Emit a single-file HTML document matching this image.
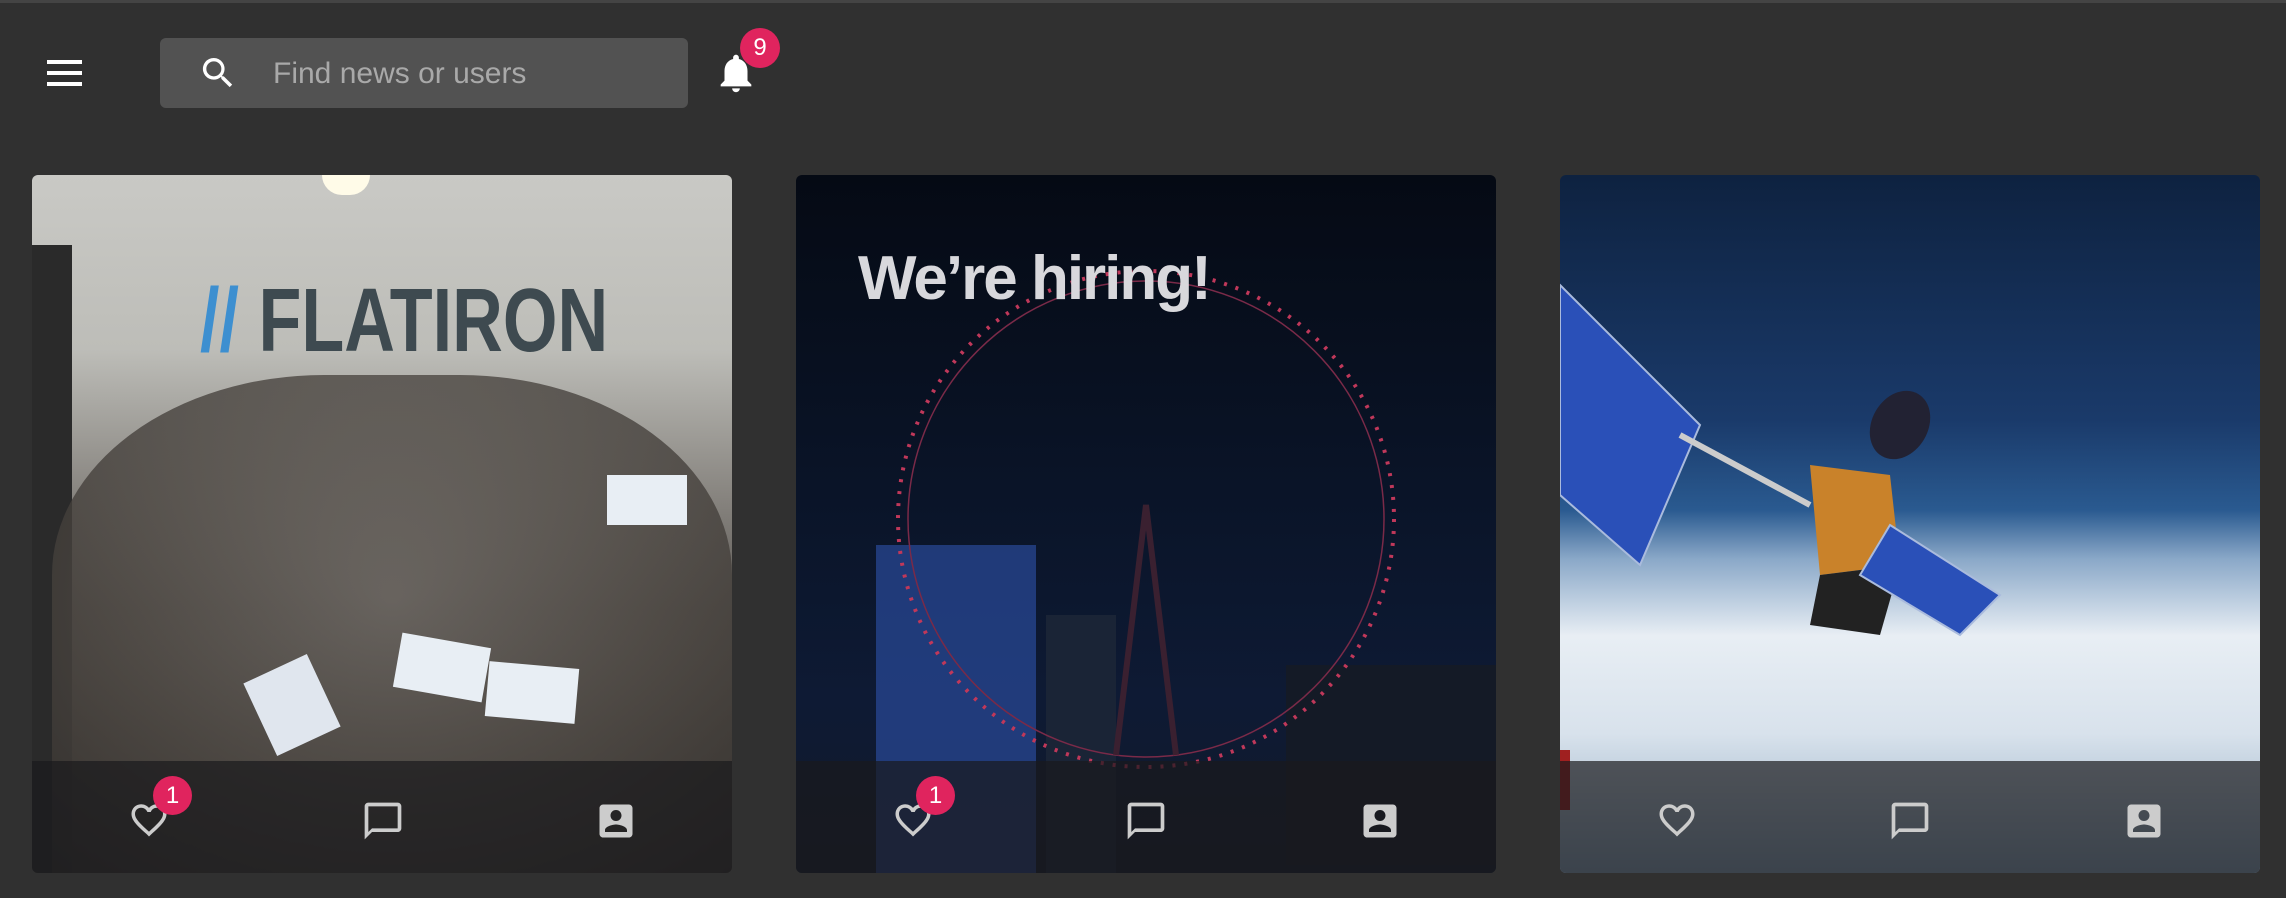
<!DOCTYPE html>
<html><head><meta charset="utf-8"><style>
*{margin:0;padding:0;box-sizing:border-box}
html,body{width:2286px;height:898px;overflow:hidden;background:#303030;font-family:"Liberation Sans",sans-serif}
body{border-top:3px solid #444;}
.ham{position:absolute;left:47px;top:60px;width:35px}
.ham i{display:block;height:4px;background:#fff;margin-bottom:7px}
.search{position:absolute;left:160px;top:38px;width:528px;height:70px;background:#525252;border-radius:6px}
.search span{position:absolute;left:113px;top:19px;font-size:30px;color:#a9a9a9}
.badge{position:absolute;background:#e0245e;color:#fff;border-radius:50%;text-align:center}
.card{position:absolute;top:175px;width:700px;height:698px;border-radius:6px;overflow:hidden}
.bar{position:absolute;left:0;right:0;bottom:0;height:112px;background:rgba(25,25,28,.7)}
.ic{position:absolute;top:799px}
</style></head><body>
<div class="ham"><i></i><i></i><i></i></div>
<div class="search">
<svg style="position:absolute;left:38px;top:15px" width="40" height="40" viewBox="0 0 24 24"><path fill="#fff" d="M15.5 14h-.8l-.3-.3A6.5 6.5 0 1 0 9.5 16a6.5 6.5 0 0 0 4.2-1.6l.3.3v.8l5 5 1.5-1.5-5-5zm-6 0a4.5 4.5 0 1 1 0-9 4.5 4.5 0 0 1 0 9z"/></svg>
<span>Find news or users</span></div>
<svg style="position:absolute;left:713px;top:48px" width="46" height="50" viewBox="0 0 24 24"><path fill="#fff" d="M12 22c1.1 0 2-.9 2-2h-4c0 1.1.9 2 2 2zm6-6v-5c0-3.1-1.6-5.6-4.5-6.3V4c0-.8-.7-1.5-1.5-1.5S10.5 3.2 10.5 4v.7C7.6 5.4 6 7.9 6 11v5l-2 2v1h16v-1l-2-2z"/></svg>
<div class="badge" style="left:740px;top:28px;width:40px;height:40px;font-size:24px;line-height:40px">9</div>

<div class="card" style="left:32px;background:linear-gradient(180deg,#c9c9c5 0%,#bdbdb8 25%,#8a8782 45%,#5e5a56 62%,#45413d 80%,#33302d 100%)">
<div style="position:absolute;left:0;top:70px;width:40px;height:630px;background:#2a2a2a"></div>
<div style="position:absolute;left:290px;top:0;width:48px;height:20px;background:#fffbe8;border-radius:0 0 24px 24px"></div>
<div style="position:absolute;left:168px;top:95px;font-size:90px;font-weight:bold;color:#3e4a50;white-space:nowrap;transform:scaleX(.78);transform-origin:left"><span style="color:#3d8fd0">//</span> FLATIRON</div>
<div style="position:absolute;left:20px;top:200px;width:680px;height:500px;background:radial-gradient(ellipse at 50% 45%,#6a6560 0%,#4d4843 55%,#35312e 100%);opacity:.8;border-radius:40% 40% 0 0"></div>
<div style="position:absolute;left:575px;top:300px;width:80px;height:50px;background:#e8eef4"></div>
<div style="position:absolute;left:455px;top:490px;width:90px;height:55px;background:#e8eef4;transform:rotate(5deg)"></div>
<div style="position:absolute;left:365px;top:465px;width:90px;height:55px;background:#e8eef4;transform:rotate(10deg)"></div>
<div style="position:absolute;left:225px;top:490px;width:70px;height:80px;background:#e0e6ee;transform:rotate(-25deg)"></div>
<div class="bar"></div></div>

<div class="card" style="left:796px;background:linear-gradient(180deg,#050a14 0%,#0a1428 45%,#0e1a34 75%,#121a2a 100%)">
<svg style="position:absolute;left:0;top:0" width="700" height="700">
<rect x="80" y="370" width="160" height="330" fill="#2a4a9a" opacity=".7"/>
<rect x="250" y="440" width="70" height="260" fill="#1a2436"/>
<rect x="490" y="490" width="210" height="200" fill="#141a26"/>
<circle cx="350" cy="344" r="248" fill="none" stroke="#c0385a" stroke-width="4" stroke-dasharray="3 9"/>
<circle cx="350" cy="344" r="238" fill="none" stroke="#7a2a48" stroke-width="1.5"/>
<path d="M320 580 L350 330 L380 580" stroke="#3a2030" stroke-width="6" fill="none"/>
</svg>
<div style="position:absolute;left:62px;top:68px;font-size:62px;font-weight:bold;color:#d8d8dc;letter-spacing:-2px">We’re hiring!</div>
<div class="bar"></div></div>

<div class="card" style="left:1560px;background:linear-gradient(180deg,#0e2240 0%,#1a3a6a 35%,#2a5a90 48%,#8aa8c8 55%,#e8eef4 66%,#d8e2ec 80%,#8aa4bc 100%)">
<svg style="position:absolute;left:0;top:0" width="700" height="700">
<polygon points="0,110 140,250 80,390 0,320" fill="#2a50b8" stroke="#aabbdd" stroke-width="2"/>
<line x1="120" y1="260" x2="250" y2="330" stroke="#ccc" stroke-width="6"/>
<polygon points="250,290 330,300 340,390 260,400" fill="#c9822a"/>
<polygon points="260,400 340,390 320,460 250,450" fill="#222"/>
<polygon points="330,350 440,420 400,460 300,400" fill="#2a50b8" stroke="#aabbdd" stroke-width="2"/>
<ellipse cx="340" cy="250" rx="28" ry="36" fill="#223" transform="rotate(30 340 250)"/>
</svg>
<div style="position:absolute;left:0;top:575px;width:10px;height:60px;background:#a02020"></div>
<div class="bar"></div></div>

<svg class="ic" style="left:128px" width="42" height="42" viewBox="0 0 24 24"><path fill="#ccc" d="M16.5 3c-1.7 0-3.4.8-4.5 2.1C10.9 3.8 9.2 3 7.5 3 4.4 3 2 5.4 2 8.5c0 3.8 3.4 6.9 8.6 11.5L12 21.4l1.4-1.3C18.6 15.4 22 12.3 22 8.5 22 5.4 19.6 3 16.5 3zm-4.4 15.6-.1.1-.1-.1C7.1 14.2 4 11.4 4 8.5 4 6.5 5.5 5 7.5 5c1.5 0 3 1 3.6 2.4h1.9C13.5 6 15 5 16.5 5c2 0 3.5 1.5 3.5 3.5 0 2.9-3.1 5.7-7.9 10.1z"/></svg>
<svg class="ic" style="left:361px" width="44" height="44" viewBox="0 0 24 24"><path fill="#ccc" d="M20 2H4c-1.1 0-2 .9-2 2v18l4-4h14c1.1 0 2-.9 2-2V4c0-1.1-.9-2-2-2zm0 14H6l-2 2V4h16v12z"/></svg>
<svg class="ic" style="left:594px" width="44" height="44" viewBox="0 0 24 24"><path fill="#ccc" d="M3 5v14c0 1.1.9 2 2 2h14c1.1 0 2-.9 2-2V5c0-1.1-.9-2-2-2H5c-1.1 0-2 .9-2 2zm12 4c0 1.7-1.3 3-3 3s-3-1.3-3-3 1.3-3 3-3 3 1.3 3 3zm-9 8c0-2 4-3.1 6-3.1s6 1.1 6 3.1v1H6v-1z"/></svg>
<div class="badge" style="left:153px;top:776px;width:39px;height:39px;font-size:24px;line-height:39px">1</div>

<svg class="ic" style="left:892px" width="42" height="42" viewBox="0 0 24 24"><path fill="#ccc" d="M16.5 3c-1.7 0-3.4.8-4.5 2.1C10.9 3.8 9.2 3 7.5 3 4.4 3 2 5.4 2 8.5c0 3.8 3.4 6.9 8.6 11.5L12 21.4l1.4-1.3C18.6 15.4 22 12.3 22 8.5 22 5.4 19.6 3 16.5 3zm-4.4 15.6-.1.1-.1-.1C7.1 14.2 4 11.4 4 8.5 4 6.5 5.5 5 7.5 5c1.5 0 3 1 3.6 2.4h1.9C13.5 6 15 5 16.5 5c2 0 3.5 1.5 3.5 3.5 0 2.9-3.1 5.7-7.9 10.1z"/></svg>
<svg class="ic" style="left:1124px" width="44" height="44" viewBox="0 0 24 24"><path fill="#ccc" d="M20 2H4c-1.1 0-2 .9-2 2v18l4-4h14c1.1 0 2-.9 2-2V4c0-1.1-.9-2-2-2zm0 14H6l-2 2V4h16v12z"/></svg>
<svg class="ic" style="left:1358px" width="44" height="44" viewBox="0 0 24 24"><path fill="#ccc" d="M3 5v14c0 1.1.9 2 2 2h14c1.1 0 2-.9 2-2V5c0-1.1-.9-2-2-2H5c-1.1 0-2 .9-2 2zm12 4c0 1.7-1.3 3-3 3s-3-1.3-3-3 1.3-3 3-3 3 1.3 3 3zm-9 8c0-2 4-3.1 6-3.1s6 1.1 6 3.1v1H6v-1z"/></svg>
<div class="badge" style="left:916px;top:776px;width:39px;height:39px;font-size:24px;line-height:39px">1</div>

<svg class="ic" style="left:1656px" width="42" height="42" viewBox="0 0 24 24"><path fill="#ccc" d="M16.5 3c-1.7 0-3.4.8-4.5 2.1C10.9 3.8 9.2 3 7.5 3 4.4 3 2 5.4 2 8.5c0 3.8 3.4 6.9 8.6 11.5L12 21.4l1.4-1.3C18.6 15.4 22 12.3 22 8.5 22 5.4 19.6 3 16.5 3zm-4.4 15.6-.1.1-.1-.1C7.1 14.2 4 11.4 4 8.5 4 6.5 5.5 5 7.5 5c1.5 0 3 1 3.6 2.4h1.9C13.5 6 15 5 16.5 5c2 0 3.5 1.5 3.5 3.5 0 2.9-3.1 5.7-7.9 10.1z"/></svg>
<svg class="ic" style="left:1888px" width="44" height="44" viewBox="0 0 24 24"><path fill="#ccc" d="M20 2H4c-1.1 0-2 .9-2 2v18l4-4h14c1.1 0 2-.9 2-2V4c0-1.1-.9-2-2-2zm0 14H6l-2 2V4h16v12z"/></svg>
<svg class="ic" style="left:2122px" width="44" height="44" viewBox="0 0 24 24"><path fill="#ccc" d="M3 5v14c0 1.1.9 2 2 2h14c1.1 0 2-.9 2-2V5c0-1.1-.9-2-2-2H5c-1.1 0-2 .9-2 2zm12 4c0 1.7-1.3 3-3 3s-3-1.3-3-3 1.3-3 3-3 3 1.3 3 3zm-9 8c0-2 4-3.1 6-3.1s6 1.1 6 3.1v1H6v-1z"/></svg>
</body></html>
